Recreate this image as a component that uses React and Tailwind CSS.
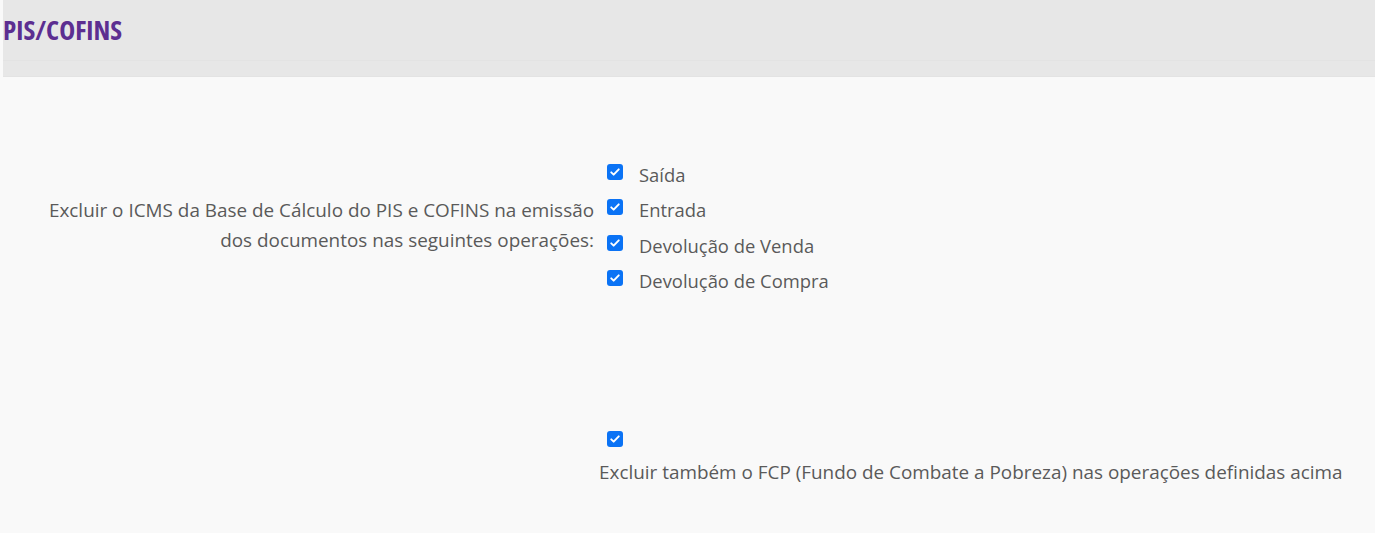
const operacoes = ["Saída", "Entrada", "Devolução de Venda", "Devolução de Compra"];

function Check() {
  return (
    <span className="flex h-4 w-4 shrink-0 items-center justify-center rounded-[3px] bg-[#0b73f5]">
      <svg viewBox="0 0 16 16" className="h-3 w-3" fill="none">
        <path d="M3 8.5l3.2 3L13 4.5" stroke="white" strokeWidth="2.6" strokeLinecap="round" strokeLinejoin="round" />
      </svg>
    </span>
  );
}

export default function App() {
  return (
    <div className="min-h-[533px] w-full bg-[#f9f9f9] text-[#5a5a5a] font-['Open_Sans',sans-serif]">
      <div className="ml-[3px] h-[77px] bg-[#e7e7e7] border-b border-[#e3e3e3]">
        <div className="h-[61px] border-b border-[#e3e3e3] pt-[12px]">
          <h2 className="text-[27px] leading-[36px] font-bold text-[#5c2e91] font-stretch-condensed">
            PIS/COFINS
          </h2>
        </div>
      </div>

      <div className="flex items-center pt-[77px]">
        <div className="w-[596px] pr-[2px] text-right text-[18.9px] leading-[30px]">
          Excluir o ICMS da Base de Cálculo do PIS e COFINS na emissão
          <br />
          dos documentos nas seguintes operações:
        </div>
        <div className="ml-[11px] flex flex-col">
          {operacoes.map((op) => (
            <label key={op} className="flex h-[35.5px] items-center gap-4">
              <Check />
              <span className="text-[18.4px] pt-[6px]">{op}</span>
            </label>
          ))}
        </div>
      </div>

      <div className="pl-[599px] pt-[135px]">
        <div className="pl-[8px]">
          <Check />
        </div>
        <p className="mt-[12px] text-[18.9px] leading-[26px]">
          Excluir também o FCP (Fundo de Combate a Pobreza) nas operações definidas acima
        </p>
      </div>
    </div>
  );
}
